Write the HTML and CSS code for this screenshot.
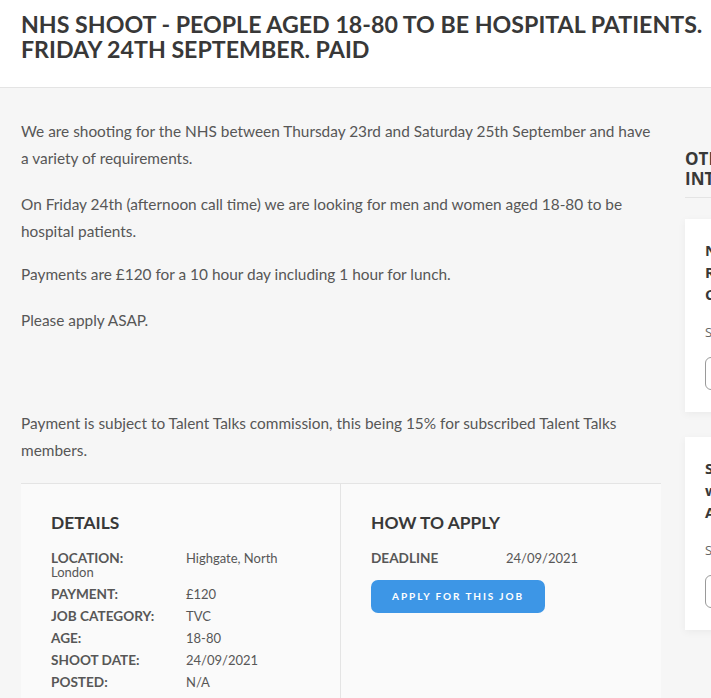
FILE: index.html
```html
<!DOCTYPE html>
<html lang="en">
  <head>
    <meta charset="UTF-8" />
    <meta name="viewport" content="width=device-width, initial-scale=1.0" />
    <title>NHS Shoot - People aged 18-80 to be hospital patients</title>
    <link rel="stylesheet" href="styles.css">
  </head>

  <body>
    <header class="job-header">
      <h1 class="job-title">
        NHS SHOOT - PEOPLE AGED 18-80 TO BE HOSPITAL PATIENTS. FRIDAY 24TH
        SEPTEMBER. PAID
      </h1>
    </header>

    <div class="page">
      <main class="job-main">
        <article class="job-body">
          <p>
            We are shooting for the NHS between Thursday 23rd and Saturday 25th
            September and have a variety of requirements.
          </p>
          <p class="tight">
            On Friday 24th (afternoon call time) we are looking for men and
            women aged 18-80 to be hospital patients.
          </p>
          <p>Payments are £120 for a 10 hour day including 1 hour for lunch.</p>
          <p>Please apply ASAP.</p>
          <p class="commission">
            Payment is subject to Talent Talks commission, this being 15% for
            subscribed Talent Talks members.
          </p>
        </article>

        <section class="job-info">
          <div class="info-col info-details">
            <h3>DETAILS</h3>
            <div class="info-row">
              <span class="info-label">LOCATION:</span>Highgate, North London
            </div>
            <div class="info-row">
              <span class="info-label">PAYMENT:</span>£120
            </div>
            <div class="info-row">
              <span class="info-label">JOB CATEGORY:</span>TVC
            </div>
            <div class="info-row">
              <span class="info-label">AGE:</span>18-80
            </div>
            <div class="info-row">
              <span class="info-label">SHOOT DATE:</span>24/09/2021
            </div>
            <div class="info-row">
              <span class="info-label">POSTED:</span>N/A
            </div>
          </div>

          <div class="info-col info-apply">
            <h3>HOW TO APPLY</h3>
            <div class="info-row">
              <span class="info-label">DEADLINE</span>24/09/2021
            </div>
            <a class="apply-btn" href="#">APPLY FOR THIS JOB</a>
          </div>
        </section>
      </main>

      <aside class="sidebar">
        <h4 class="sidebar-title">OTHER JOBS YOU MAY BE<br />INTERESTED IN</h4>

        <div class="side-card">
          <h5>NHS SHOOT - PEOPLE<br />REQUIRED FOR<br />CORPORATE FILM</h5>
          <p>Shoot date: 23/09/2021</p>
          <a class="side-btn" href="#">VIEW JOB</a>
        </div>

        <div class="side-card">
          <h5>SUPPORTING ARTISTS<br />wanted for TV drama<br />AUDITIONS OPEN</h5>
          <p>Shoot date: 25/09/2021</p>
          <a class="side-btn" href="#">VIEW JOB</a>
        </div>
      </aside>
    </div>
  </body>
</html>
```

FILE: styles.css
```css
*,
*::before,
*::after {
  box-sizing: border-box;
}
:root {
  --bg: #f6f6f6;
  --surface: #ffffff;
  --panel: #fafafa;
  --line: #e4e4e4;
  --title: #383838;
  --text: #575757;
  --blue: #3d96e6;
}
html,
body {
  overflow-x: hidden;
}
body {
  margin: 0;
  font-family: "Lato", "Open Sans", sans-serif;
  background: var(--bg);
  color: var(--text);
}
a {
  text-decoration: none;
}
.job-header {
  background: var(--surface);
  border-bottom: 1px solid var(--line);
  padding: 12px 21px 25px;
}
.job-title {
  margin: 0;
  width: 700px;
  font-size: 23.2px;
  line-height: 25px;
  font-weight: 700;
  color: var(--title);
}
.page {
  display: flex;
  gap: 24px;
  padding: 30px 21px 0;
  width: 1000px;
}
.job-main {
  flex: 0 0 640px;
}
.job-body p {
  margin: 0 0 19px;
  font-size: 15.4px;
  line-height: 27px;
}
.job-body .tight {
  margin-bottom: 16px;
}
.job-body .commission {
  margin-top: 76px;
}
.job-info {
  display: flex;
  background: var(--panel);
  border-top: 1px solid var(--line);
  min-height: 230px;
}
.info-col {
  flex: 1;
  padding: 29px 30px 20px;
}
.info-details {
  flex: 0 0 320px;
  border-right: 1px solid var(--line);
}
.info-col h3 {
  margin: 0 0 18px;
  font-size: 17.4px;
  line-height: 20px;
  font-weight: 700;
  color: var(--title);
}
.info-row {
  font-size: 13px;
  line-height: 14px;
  margin-bottom: 8px;
}
.info-label {
  display: inline-block;
  width: 135px;
  font-size: 13.6px;
  font-weight: 700;
}
.apply-btn {
  display: inline-block;
  margin-top: 7px;
  width: 174px;
  height: 33px;
  line-height: 33px;
  text-align: center;
  background: var(--blue);
  color: #fff;
  border-radius: 7px;
  font-size: 10px;
  font-weight: 700;
  letter-spacing: 1.9px;
}
.sidebar {
  flex: 0 0 260px;
  padding-top: 31px;
  font-family: "Open Sans", sans-serif;
}
.sidebar-title {
  margin: 0;
  padding-bottom: 8px;
  border-bottom: 1px solid var(--line);
  font-size: 17px;
  line-height: 20px;
  font-weight: 700;
  color: var(--title);
}
.side-card {
  background: var(--surface);
  margin-top: 21px;
  padding: 20px 20px 22px;
  box-shadow: 0 2px 8px rgba(0, 0, 0, 0.05);
}
.side-card + .side-card {
  margin-top: 25px;
}
.side-card h5 {
  margin: 0;
  font-size: 15px;
  line-height: 22px;
  font-weight: 700;
  color: var(--title);
}
.side-card p {
  margin: 17px 0 15px;
  font-size: 13px;
  line-height: 20px;
  color: #666;
}
.side-btn {
  display: inline-block;
  padding: 0 24px;
  height: 33px;
  line-height: 31px;
  border: 1px solid #9a9a9a;
  border-radius: 6px;
  font-size: 12px;
  color: var(--text);
}
```
